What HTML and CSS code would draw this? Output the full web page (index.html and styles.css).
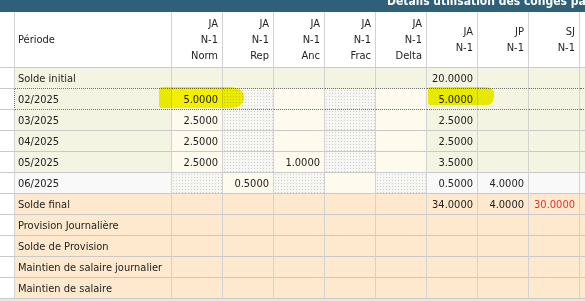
FILE: index.html
```html
<!DOCTYPE html>
<html lang="fr">
<head>
<meta charset="utf-8">
<title>Détails utilisation des congés payés</title>
<link rel="stylesheet" href="styles.css">
</head>
<body>
<div class="panel">
  <div class="titlebar"><div class="title">Détails utilisation des congés payés</div></div>
  <table class="grid">
    <colgroup>
      <col class="c-strip"><col class="c-per">
      <col class="c-num"><col class="c-num"><col class="c-num"><col class="c-num">
      <col class="c-num"><col class="c-num"><col class="c-num"><col class="c-num">
      <col class="c-extra">
    </colgroup>
    <thead>
      <tr class="head">
        <th class="strip"></th>
        <th class="per">Période</th>
        <th>JA<br>N-1<br>Norm</th>
        <th>JA<br>N-1<br>Rep</th>
        <th>JA<br>N-1<br>Anc</th>
        <th>JA<br>N-1<br>Frac</th>
        <th>JA<br>N-1<br>Delta</th>
        <th>JA<br>N-1</th>
        <th>JP<br>N-1</th>
        <th>SJ<br>N-1</th>
        <th></th>
      </tr>
    </thead>
    <tbody>
      <tr class="before-sel">
        <td class="strip"></td><td class="per g">Solde initial</td>
        <td class="g"></td><td class="g"></td><td class="g"></td><td class="g"></td><td class="g"></td>
        <td class="g">20.0000</td><td class="g"></td><td class="g"></td><td class="g"></td>
      </tr>
      <tr class="sel">
        <td class="strip"></td><td class="per g">02/2025</td>
        <td class="c">5.0000</td><td class="d"></td><td class="c"></td><td class="d"></td><td class="c"></td>
        <td class="g">5.0000</td><td class="g"></td><td class="g"></td><td class="g"></td>
      </tr>
      <tr>
        <td class="strip"></td><td class="per g">03/2025</td>
        <td class="c">2.5000</td><td class="d"></td><td class="c"></td><td class="d"></td><td class="c"></td>
        <td class="g">2.5000</td><td class="g"></td><td class="g"></td><td class="g"></td>
      </tr>
      <tr>
        <td class="strip"></td><td class="per g">04/2025</td>
        <td class="c">2.5000</td><td class="d"></td><td class="c"></td><td class="d"></td><td class="c"></td>
        <td class="g">2.5000</td><td class="g"></td><td class="g"></td><td class="g"></td>
      </tr>
      <tr>
        <td class="strip"></td><td class="per g">05/2025</td>
        <td class="c">2.5000</td><td class="d"></td><td class="c">1.0000</td><td class="d"></td><td class="c"></td>
        <td class="g">3.5000</td><td class="g"></td><td class="g"></td><td class="g"></td>
      </tr>
      <tr>
        <td class="strip"></td><td class="per w">06/2025</td>
        <td class="d"></td><td class="c">0.5000</td><td class="d"></td><td class="c"></td><td class="d"></td>
        <td class="w">0.5000</td><td class="w">4.0000</td><td class="w"></td><td class="w"></td>
      </tr>
      <tr>
        <td class="strip"></td><td class="per o">Solde final</td>
        <td class="o"></td><td class="o"></td><td class="o"></td><td class="o"></td><td class="o"></td>
        <td class="o">34.0000</td><td class="o">4.0000</td><td class="o neg">30.0000</td><td class="o"></td>
      </tr>
      <tr>
        <td class="strip"></td><td class="per o">Provision Journalière</td>
        <td class="o"></td><td class="o"></td><td class="o"></td><td class="o"></td><td class="o"></td>
        <td class="o"></td><td class="o"></td><td class="o"></td><td class="o"></td>
      </tr>
      <tr>
        <td class="strip"></td><td class="per o">Solde de Provision</td>
        <td class="o"></td><td class="o"></td><td class="o"></td><td class="o"></td><td class="o"></td>
        <td class="o"></td><td class="o"></td><td class="o"></td><td class="o"></td>
      </tr>
      <tr>
        <td class="strip"></td><td class="per o">Maintien de salaire journalier</td>
        <td class="o"></td><td class="o"></td><td class="o"></td><td class="o"></td><td class="o"></td>
        <td class="o"></td><td class="o"></td><td class="o"></td><td class="o"></td>
      </tr>
      <tr>
        <td class="strip"></td><td class="per o">Maintien de salaire</td>
        <td class="o"></td><td class="o"></td><td class="o"></td><td class="o"></td><td class="o"></td>
        <td class="o"></td><td class="o"></td><td class="o"></td><td class="o"></td>
      </tr>
    </tbody>
  </table>
  <div class="hl hl-a"></div>
  <div class="hl hl-b"></div>
</div>
</body>
</html>
```
FILE: styles.css
```css
html, body {
  margin: 0;
  padding: 0;
}
body {
  background: #e8e8e8;
  font-family: "DejaVu Sans Condensed", "DejaVu Sans", sans-serif;
  font-size: 11px;
  color: #222;
  overflow: hidden;
}
.panel {
  position: relative;
  width: 585px;
  height: 301px;
  overflow: hidden;
}
.titlebar {
  height: 12px;
  background: #2e6079;
  overflow: hidden;
  color: #fff;
}
.title {
  font-weight: bold;
  font-size: 12px;
  line-height: 12px;
  margin-top: -5px;
  padding-left: 387px;
  white-space: nowrap;
}
.grid {
  border-collapse: separate;
  border-spacing: 0;
  table-layout: fixed;
  width: 660px;
}
.c-strip { width: 15px; }
.c-per { width: 157px; }
.c-num { width: 51px; }
.c-extra { width: 80px; }
.grid th,
.grid td {
  padding: 0 4px 0 3px;
  border-right: 1px solid #d3d3d3;
  border-bottom: 1px solid #c9c9c9;
  white-space: nowrap;
  overflow: hidden;
  text-align: right;
  vertical-align: middle;
}
.grid th {
  background: #fff;
  font-weight: normal;
  line-height: 16px;
  color: #222;
}
.head { height: 56px; }
.grid tbody tr { height: 21px; }
.grid .strip {
  background: #fff;
  padding: 0;
}
.grid .per {
  text-align: left;
}
.g { background: #f3f4e2; }
.c { background: #fffaee; }
.w { background: #f9f9f9; }
.o { background: #fee9cf; }
.d {
  background:
    radial-gradient(circle, #cfcfcf 0.7px, transparent 0.9px) 0 0 / 3px 3px,
    #f6f6f3;
}
.neg { color: #e8322f; }
.before-sel td,
.sel td { border-bottom: 1px dotted #6e6e6e; }
.grid .before-sel td.strip,
.grid .sel td.strip {
  border-bottom: 1px solid #c9c9c9;
}
.grid .sel td.strip { border-right: 1px dotted #6e6e6e; }
.hl {
  position: absolute;
  background: #f4f400;
  mix-blend-mode: multiply;
}
.hl-a {
  left: 159px;
  top: 87px;
  width: 85px;
  height: 21px;
  border-radius: 3px 14px 12px 3px / 3px 9px 10px 3px;
}
.hl-b {
  left: 428px;
  top: 87px;
  width: 66px;
  height: 18px;
  border-radius: 2px 9px 7px 2px / 2px 6px 8px 2px;
}
```
